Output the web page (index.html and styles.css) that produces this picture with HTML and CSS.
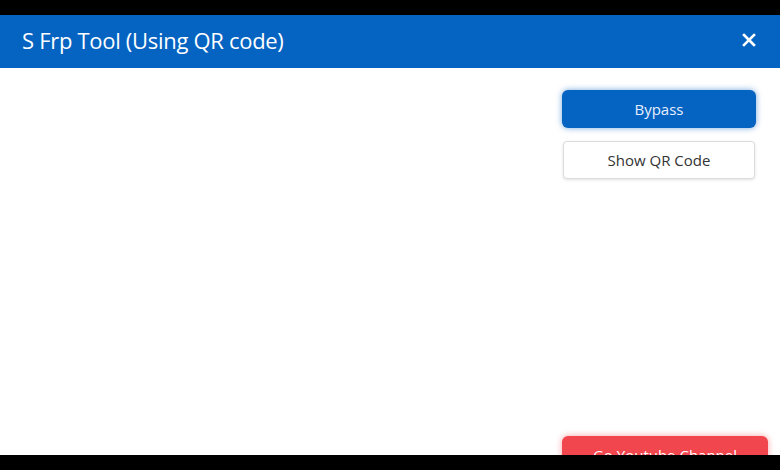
FILE: index.html
```html
<!DOCTYPE html>
<html>
<head>
<meta charset="utf-8">
<link rel="stylesheet" href="styles.css">
</head>
<body>
<div class="frame">
  <div class="letterbox"></div>
  <header class="titlebar">
    <span class="title">S Frp Tool (Using QR code)</span>
    <span class="close">
      <svg width="14" height="14" viewBox="0 0 14 14"><path d="M2 2 L12 12 M12 2 L2 12" stroke="#fff" stroke-width="2.6" stroke-linecap="square"/></svg>
    </span>
  </header>
  <main class="content">
    <div class="actions">
      <button class="btn btn-primary">Bypass</button>
      <button class="btn btn-light">Show QR Code</button>
      <button class="btn btn-danger">Go Youtube Channel</button>
    </div>
  </main>
  <div class="letterbox"></div>
</div>
</body>
</html>
```

FILE: styles.css
```css
html, body {
  margin: 0;
  padding: 0;
  background: #000;
  overflow: hidden;
}
.frame {
  width: 780px;
  height: 470px;
  display: flex;
  flex-direction: column;
  font-family: "Open Sans", "Noto Sans", sans-serif;
}
.letterbox {
  height: 15px;
  flex: 0 0 15px;
  background: #000;
}
.titlebar {
  flex: 0 0 53px;
  height: 53px;
  background: #0563c1;
  display: flex;
  align-items: center;
  padding: 0 22px 3px;
  box-sizing: border-box;
}
.title {
  color: #fff;
  font-size: 22px;
  flex: 1;
  letter-spacing: -0.3px;
}
.close {
  display: flex;
  margin-right: 2px;
}
.content {
  flex: 1;
  min-height: 0;
  background: #fff;
  overflow: hidden;
  display: flex;
  justify-content: flex-end;
  padding: 22px 12px 0 0;
}
.actions {
  width: 206px;
  display: flex;
  flex-direction: column;
  align-items: flex-start;
}
.btn {
  font-family: "Open Sans", "Noto Sans", sans-serif;
  font-size: 15px;
  height: 38px;
  flex: 0 0 38px;
  border-radius: 6px;
  border: none;
  padding: 0;
}
.btn-primary {
  width: 194px;
  background: #0563c1;
  color: #e6efff;
  box-shadow: 0 0 6px rgba(5, 99, 193, 0.55);
}
.btn-light {
  margin-top: 13px;
  margin-left: 1px;
  width: 192px;
  background: #fff;
  color: #333;
  border: 1px solid #dcdcdc;
  border-radius: 4px;
  box-shadow: 0 1px 3px rgba(0, 0, 0, 0.12);
}
.btn-danger {
  margin-top: 257px;
  width: 206px;
  background: #f2464f;
  color: #fff;
  box-shadow: 0 0 6px rgba(242, 70, 79, 0.5);
}
```
